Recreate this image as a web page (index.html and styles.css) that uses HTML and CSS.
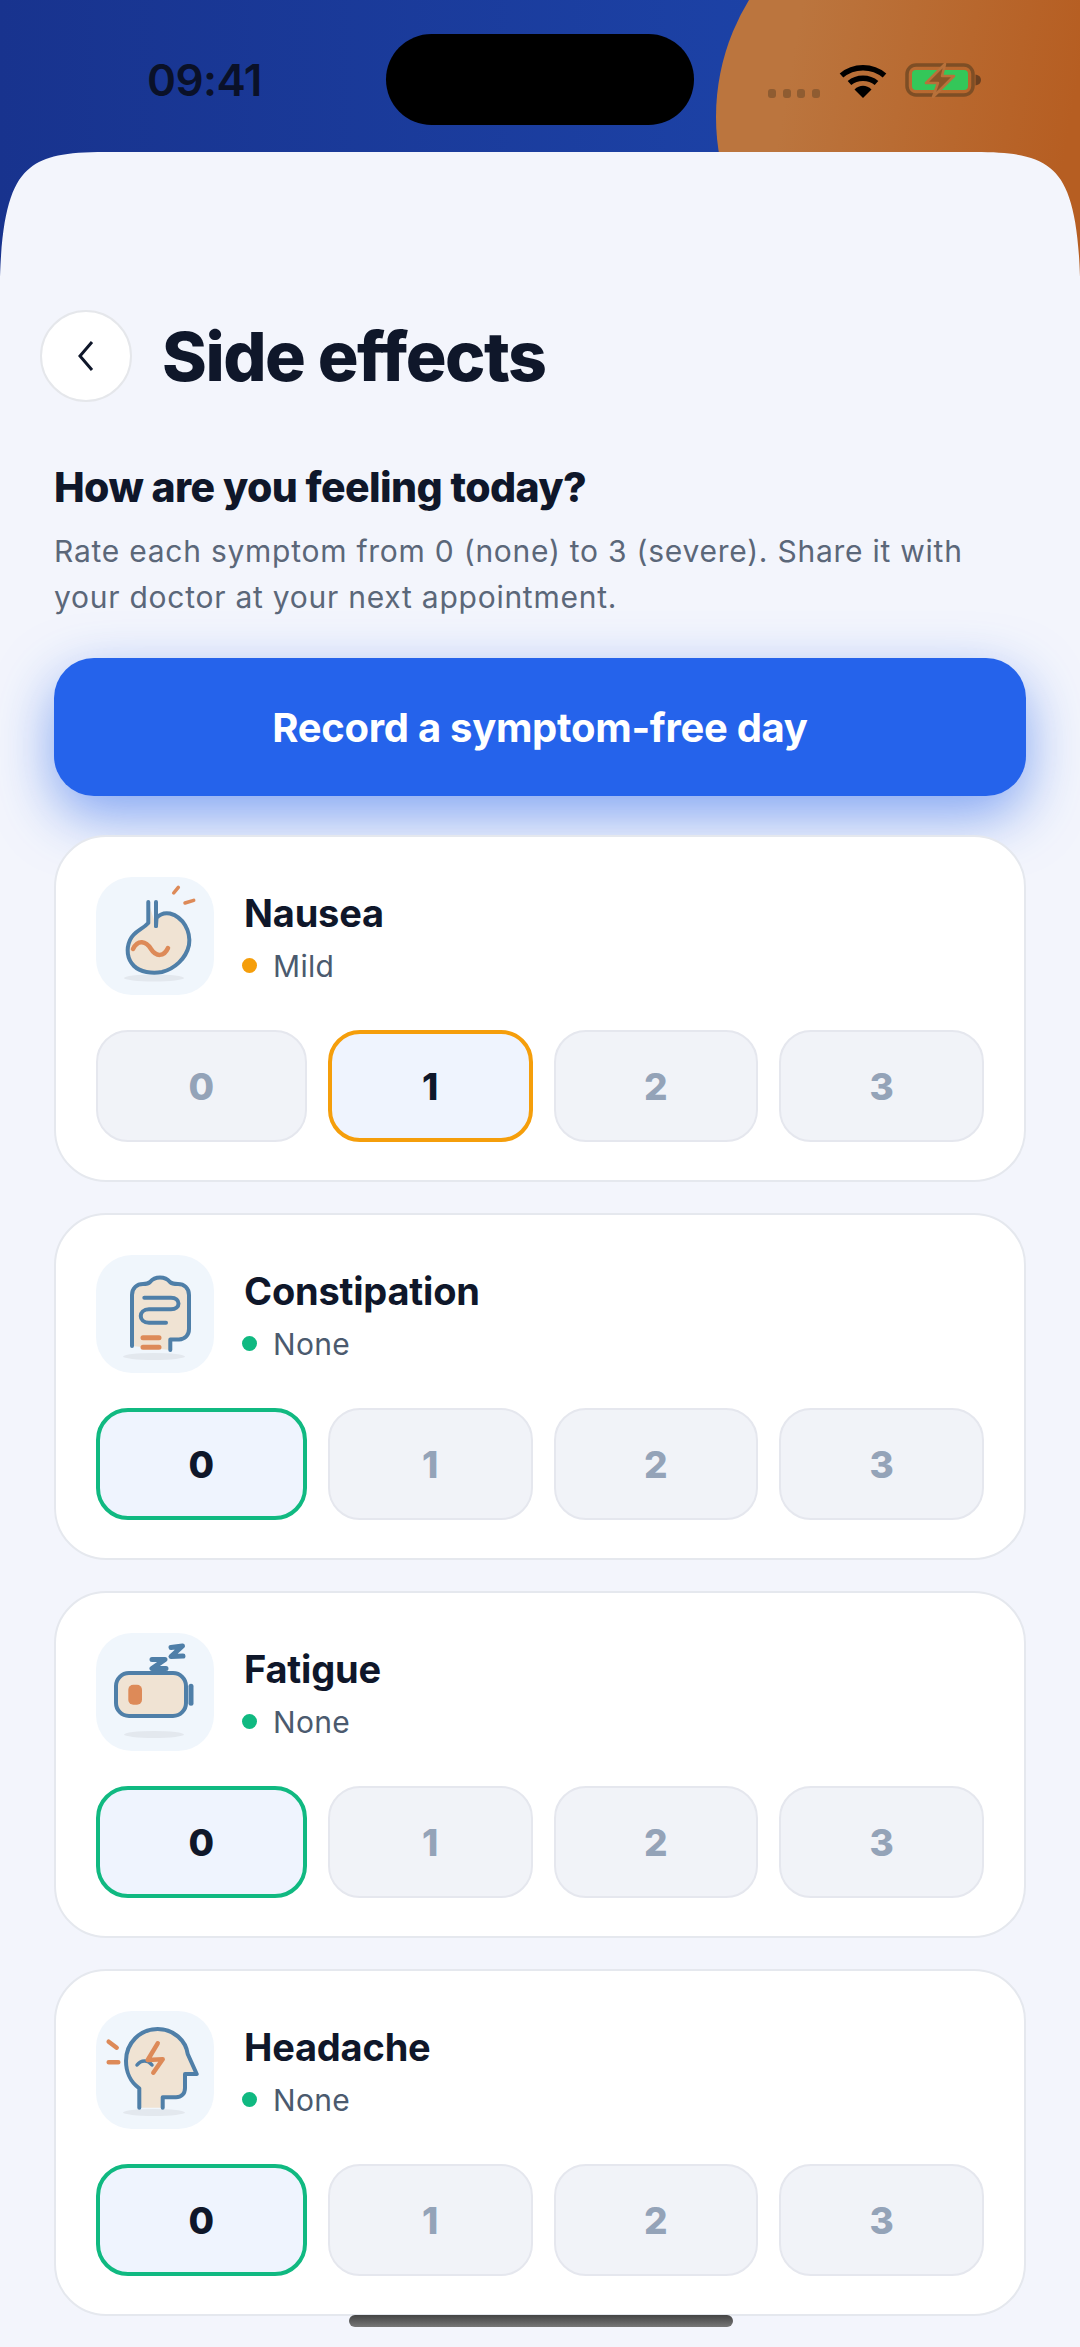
FILE: index.html
```html
<!DOCTYPE html>
<html>
<head>
    <meta charset="UTF-8">
    <meta name="viewport" content="width=device-width, initial-scale=1">
    <title>Side effects</title>
    <link rel="stylesheet" href="styles.css">
</head>
<body>
<div class="phone">
    <div class="blob"></div>

    <div class="status">
        <span class="time">09:41</span>
        <div class="island"></div>
        <div class="status_icons">
            <div class="signal"><i></i><i></i><i></i><i></i></div>
            <svg class="wifi" width="48" height="34" viewBox="0 0 48 34">
                <path d="M2.500 11.500C14.500 1 33.500 1 45.500 11.500" fill="none" stroke="#000" stroke-width="5.500"/>
                <path d="M10.500 19C18 12.500 30 12.500 37.500 19" fill="none" stroke="#000" stroke-width="5.500"/>
                <path d="M15.500 25.500C20.500 20.500 27.500 20.500 32.500 25.500L24 34Z" fill="#000"/>
            </svg>
            <svg class="battery" width="77" height="36" viewBox="0 0 77 36">
                <rect x="2" y="3" width="66" height="30" rx="9" fill="none" stroke="#7e4e25" stroke-width="3.500"/>
                <rect x="7" y="8" width="56" height="20" rx="4" fill="#34c759"/>
                <path d="M70.500 12.500C74 13 76 15 76 18C76 21 74 23 70.500 23.500Z" fill="#6b4020"/>
                <path d="M40 2L21 21H33L28 35L49 14H37Z" fill="#8a5428" stroke="#b8713a" stroke-width="2.500" stroke-linejoin="round"/>
            </svg>
        </div>
    </div>

    <div class="sheet">
        <div class="header">
            <button class="back">
                <svg width="20" height="32" viewBox="0 0 20 32"><path d="M16 2L4 16L16 30" fill="none" stroke="#0f172a" stroke-width="3"/></svg>
            </button>
            <h1 class="main_title">Side effects</h1>
        </div>

        <p class="sub_title">How are you feeling today?</p>
        <p class="intro">Rate each symptom from 0 (none) to 3 (severe). Share it with<br>your doctor at your next appointment.</p>

        <button class="record">Record a symptom-free day</button>

        <div class="card">
            <div class="card_head">
                <div class="tile">
                    <svg width="117" height="117" viewBox="0 0 117 117">
                        <ellipse class="shade" cx="58" cy="101" rx="30" ry="3.500"/>
                        <path class="skin line" d="M52.300 25V46C46 53 38 54 34 63C30 72 31 82 38 89C44 95 56 97 66 95C78 92 90 82 93 68C95 54 87 40 74 36.500C69 35.500 64 37 60.500 41L60 49"/>
                        <path class="line" d="M60 25V49"/>
                        <path class="hot" d="M37 72C42 62 50 64 55 72C60 80 68 80 72 71"/>
                        <path class="hot thin" d="M77.700 16L82.300 10.300M89 26L97.700 23.300"/>
                    </svg>
                </div>
                <div class="info">
                    <div class="name">Nausea</div>
                    <div class="level"><span class="dot dot_mild"></span>Mild</div>
                </div>
            </div>
            <div class="rate">
                <button class="num">0</button>
                <button class="num on_mild">1</button>
                <button class="num">2</button>
                <button class="num">3</button>
            </div>
        </div>

        <div class="card">
            <div class="card_head">
                <div class="tile">
                    <svg width="117" height="117" viewBox="0 0 117 117">
                        <ellipse class="shade" cx="58" cy="101.500" rx="31" ry="3.500"/>
                        <path class="skin" d="M36 91V40C36 33 41 29 47 29C50 29 52 29 54 27C59 21 69 21 74 27C76 29 79 29 82 29C88 29 93 33 93 40V74C93 80 89 84 83 84.500H74.300V95Z"/>
                        <path class="line" d="M36 91V40C36 33 41 29 47 29C50 29 52 29 54 27C59 21 69 21 74 27C76 29 79 29 82 29C88 29 93 33 93 40V74C93 80 89 84 83 84.500H74.300V95"/>
                        <path class="line" d="M48.300 42.700H75C85 42.700 85 54.300 75 54.300H53C42 54.300 42 67.700 53 67.700H70"/>
                        <path class="hot wide" d="M47 82.700H63M47 92.300H63"/>
                    </svg>
                </div>
                <div class="info">
                    <div class="name">Constipation</div>
                    <div class="level"><span class="dot dot_none"></span>None</div>
                </div>
            </div>
            <div class="rate">
                <button class="num on_none">0</button>
                <button class="num">1</button>
                <button class="num">2</button>
                <button class="num">3</button>
            </div>
        </div>

        <div class="card">
            <div class="card_head">
                <div class="tile">
                    <svg width="117" height="117" viewBox="0 0 117 117">
                        <ellipse class="shade" cx="58" cy="101.500" rx="30" ry="3.500"/>
                        <rect class="skin line" x="20" y="40" width="70" height="43" rx="13"/>
                        <rect x="92.500" y="50.700" width="5" height="22" rx="2.500" fill="#4f7fa8"/>
                        <rect x="32.300" y="51.700" width="13.700" height="20" rx="5" fill="#dd8a58"/>
                        <path class="line wide" d="M56 26.500H69L56 35.500H70M75 14.500L86.500 13L75 23.500L87 23"/>
                    </svg>
                </div>
                <div class="info">
                    <div class="name">Fatigue</div>
                    <div class="level"><span class="dot dot_none"></span>None</div>
                </div>
            </div>
            <div class="rate">
                <button class="num on_none">0</button>
                <button class="num">1</button>
                <button class="num">2</button>
                <button class="num">3</button>
            </div>
        </div>

        <div class="card">
            <div class="card_head">
                <div class="tile">
                    <svg width="117" height="117" viewBox="0 0 117 117">
                        <ellipse class="shade" cx="58" cy="101.500" rx="31" ry="3.500"/>
                        <path class="skin" d="M43.300 96.700V77.300C34 71 30 60 30 50C30 32 44 18 61.700 18C78 18 90 30 91.700 43L100.700 63H89V77C89 83 85 86.300 80 86.300H66.700V96.700Z"/>
                        <path class="line" d="M43.300 96.700V77.300C34 71 30 60 30 50C30 32 44 18 61.700 18C78 18 90 30 91.700 43L100.700 63H89V77C89 83 85 86.300 80 86.300H66.700V96.700"/>
                        <path class="line thin" d="M41 54C45 48.500 52 48.500 56 54"/>
                        <path class="hot" d="M61.700 32.300L51.700 49L66.700 48.300L57.300 61.700"/>
                        <path class="hot" d="M12.700 30.700L20.700 36.700M12.700 51.300H22.300"/>
                    </svg>
                </div>
                <div class="info">
                    <div class="name">Headache</div>
                    <div class="level"><span class="dot dot_none"></span>None</div>
                </div>
            </div>
            <div class="rate">
                <button class="num on_none">0</button>
                <button class="num">1</button>
                <button class="num">2</button>
                <button class="num">3</button>
            </div>
        </div>
    </div>

    <div class="home_bar"></div>
</div>
</body>
</html>
```

FILE: styles.css
```css
* {
    box-sizing: border-box;
}
html, body {
    margin: 0;
    padding: 0;
}
body {
    font-family: Inter, "Liberation Sans", sans-serif;
    color: #0f172a;
}
button {
    font-family: inherit;
    padding: 0;
}
.phone {
    position: relative;
    width: 1080px;
    height: 2347px;
    overflow: hidden;
    display: flex;
    flex-direction: column;
    background: linear-gradient(90deg, #18338e, #1e48b0);
}
.blob {
    position: absolute;
    left: 716px;
    top: -107px;
    width: 448px;
    height: 448px;
    border-radius: 50%;
    background: linear-gradient(100deg, #bb753e 20%, #b65e22 75%);
}

/* status bar */
.status {
    position: relative;
    height: 152px;
    flex: none;
}
.time {
    position: absolute;
    left: 147px;
    top: 57px;
    font-size: 44px;
    line-height: 46px;
    font-weight: 600;
    letter-spacing: -0.600px;
    color: #0a1128;
}
.island {
    position: absolute;
    left: 386px;
    top: 34px;
    width: 308px;
    height: 91px;
    border-radius: 46px;
    background: #000;
}
.status_icons {
    position: absolute;
    left: 768px;
    top: 62px;
    display: flex;
    align-items: flex-end;
}
.signal {
    display: flex;
    gap: 6.500px;
    margin-right: 19px;
}
.signal i {
    width: 8px;
    height: 9px;
    border-radius: 3px;
    background: #8f5c31;
}
.wifi {
    margin-right: 18px;
}

/* sheet */
.sheet {
    position: relative;
    flex: 1;
    padding: 158px 54px 0;
    background: #f3f5fc;
    clip-path: path("M0 125C2 60 12 30 30 16C45 4 65 0 105 0H975C1015 0 1035 4 1050 16C1068 30 1078 60 1080 125V2195H0Z");
}
.header {
    display: flex;
    align-items: center;
    gap: 30px;
    margin-left: -14px;
}
.back {
    width: 92px;
    height: 92px;
    display: flex;
    align-items: center;
    justify-content: center;
    background: #fff;
    border: 2px solid #e5e7eb;
    border-radius: 50%;
}
.main_title {
    margin: 0;
    font-size: 68px;
    font-weight: 800;
    letter-spacing: -1.500px;
    color: #0f172a;
}
.sub_title {
    margin: 62px 0 0;
    font-size: 41px;
    line-height: 46px;
    font-weight: 800;
    letter-spacing: -0.600px;
    color: #0f172a;
}
.intro {
    margin: 18px 0 0;
    font-size: 30px;
    line-height: 46px;
    letter-spacing: 0.750px;
    color: #5b6779;
}
.record {
    display: block;
    width: 972px;
    height: 138px;
    margin: 38px 0 39px;
    border: 0;
    border-radius: 40px;
    background: #2563eb;
    box-shadow: 0 20px 56px rgba(37, 99, 235, 0.55);
    font-size: 40px;
    font-weight: 700;
    letter-spacing: -0.300px;
    color: #fff;
}

/* symptom cards */
.card {
    position: relative;
    height: 347px;
    margin-bottom: 31px;
    padding: 40px;
    background: #fff;
    border: 2px solid #e5e8ee;
    border-radius: 52px;
}
.card_head {
    display: flex;
    align-items: center;
    gap: 30px;
    height: 118px;
    margin-bottom: 35px;
}
.tile {
    width: 118px;
    height: 118px;
    flex: none;
    border-radius: 36px;
    background: #f0f6fc;
}
.tile svg {
    display: block;
}
.shade {
    fill: #e3e8ee;
}
.skin {
    fill: #f0e3d3;
}
.line {
    fill: none;
    stroke: #4f7fa8;
    stroke-width: 4;
    stroke-linecap: round;
    stroke-linejoin: round;
}
.skin.line {
    fill: #f0e3d3;
}
.hot {
    fill: none;
    stroke: #dd8a58;
    stroke-width: 4.500;
    stroke-linecap: round;
    stroke-linejoin: round;
}
.hot.wide, .line.wide {
    stroke-width: 5;
}
.thin {
    stroke-width: 3.500;
}
.info {
    padding-top: 3px;
}
.name {
    font-size: 38px;
    line-height: 46px;
    font-weight: 700;
    letter-spacing: -0.200px;
    color: #0f172a;
}
.level {
    display: flex;
    align-items: center;
    margin-top: 10px;
    margin-left: -2px;
    font-size: 30px;
    line-height: 40px;
    letter-spacing: 0.300px;
    color: #4b5a6e;
}
.dot {
    width: 15px;
    height: 15px;
    margin-right: 16px;
    border-radius: 50%;
}
.dot_mild {
    background: #f59e0b;
}
.dot_none {
    background: #10b981;
}
.rate {
    display: grid;
    grid-template-columns: 1.03fr 1fr 1fr 1fr;
    gap: 21px;
}
.num {
    height: 112px;
    background: #f1f3f8;
    border: 2px solid #e5e7ee;
    border-radius: 32px;
    font-size: 37px;
    font-weight: 800;
    color: #94a3b8;
}
.on_mild, .on_none {
    background: #eff4fe;
    border-width: 4.500px;
    color: #0f172a;
}
.on_mild {
    border-color: #f59e0b;
}
.on_none {
    border-color: #10b981;
}
.home_bar {
    position: absolute;
    left: 349px;
    top: 2315px;
    width: 384px;
    height: 12px;
    border-radius: 6px;
    background: linear-gradient(180deg, #444, #777);
}
```
